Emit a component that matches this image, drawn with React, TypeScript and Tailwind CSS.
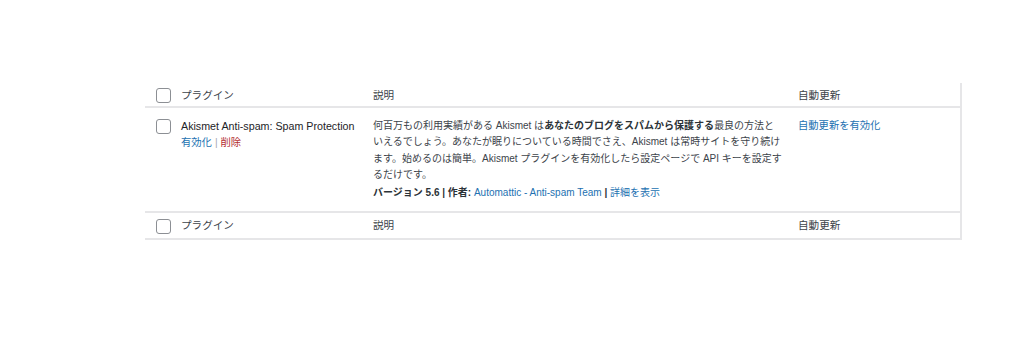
import React from 'react';

const font = {
  fontFamily: '"Liberation Sans", "Noto Sans CJK JP", sans-serif',
};

function Check() {
  return <span className="block w-[15px] h-[15px] rounded-[3px] border border-[#8c8f94] bg-white" />;
}

function HeadRow({ top }: { top?: boolean }) {
  return (
    <div
      className={`grid grid-cols-[36px_192px_425px_1fr] items-center text-[#3c434a] text-[10.6px] ${
        top ? 'h-[25px] pt-[2px] border-b-2 border-[#e6e6e8]' : 'h-[29px] pt-[1px] border-t-2 border-b-2 border-[#e6e6e8]'
      }`}
    >
      <div className="pl-[11px]">
        <Check />
      </div>
      <div>プラグイン</div>
      <div>説明</div>
      <div>自動更新</div>
    </div>
  );
}

export default function App() {
  return (
    <div className="w-[1024px] h-[341px] bg-white text-[10.3px]" style={font}>
      <div className="pt-[83px] pl-[145px]">
        <div className="w-[817px] border-r-2 border-[#e6e6e8]">
          <HeadRow top />
          <div className="grid grid-cols-[36px_192px_425px_1fr] pt-[10px] pb-[10px] leading-[16.4px] text-[#3c434a]">
            <div className="pl-[11px] pt-[1px]">
              <Check />
            </div>
            <div>
              <div className="text-[#1d2327] text-[10.7px]">Akismet Anti-spam: Spam Protection</div>
              <div className="pt-[1px]">
                <span className="text-[#2271b1]">有効化</span>
                <span className="text-[#a7aaad] mx-[3px]">|</span>
                <span className="text-[#b32d2e]">削除</span>
              </div>
            </div>
            <div className="pr-[4px] whitespace-nowrap text-[10px]">
              <p>
                何百万もの利用実績がある Akismet は<b className="font-bold text-[#2c3338]">あなたのブログをスパムから保護する</b>最良の方法と
                <br />
                いえるでしょう。あなたが眠りについている時間でさえ、Akismet は常時サイトを守り続け
                <br />
                ます。始めるのは簡単。Akismet プラグインを有効化したら設定ページで API キーを設定す
                <br />
                るだけです。
              </p>
              <p className="mt-[1px]">
                <span className="font-semibold text-[#2c3338]">バージョン 5.6 | 作者: </span>
                <span className="text-[#2271b1]">Automattic - Anti-spam Team</span>
                <span className="font-semibold text-[#2c3338]"> | </span>
                <span className="text-[#2271b1]">詳細を表示</span>
              </p>
            </div>
            <div>
              <span className="text-[#2271b1]">自動更新を有効化</span>
            </div>
          </div>
          <HeadRow />
        </div>
      </div>
    </div>
  );
}
